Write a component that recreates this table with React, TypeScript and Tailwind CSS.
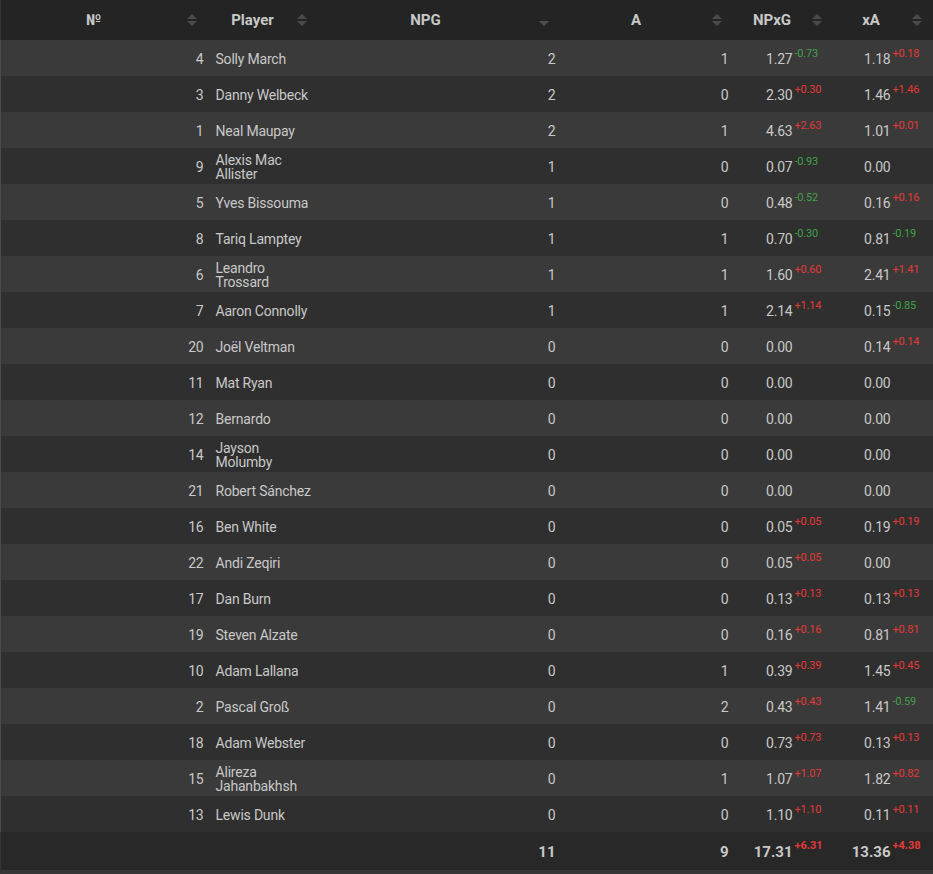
import React from "react";

type Row = {
  no: number;
  name: string[];
  npg: number;
  a: number;
  npxg: string;
  npxgD?: string;
  xa: string;
  xaD?: string;
};

const ROWS: Row[] = [
  { no: 4, name: ["Solly March"], npg: 2, a: 1, npxg: "1.27", npxgD: "-0.73", xa: "1.18", xaD: "+0.18" },
  { no: 3, name: ["Danny Welbeck"], npg: 2, a: 0, npxg: "2.30", npxgD: "+0.30", xa: "1.46", xaD: "+1.46" },
  { no: 1, name: ["Neal Maupay"], npg: 2, a: 1, npxg: "4.63", npxgD: "+2.63", xa: "1.01", xaD: "+0.01" },
  { no: 9, name: ["Alexis Mac", "Allister"], npg: 1, a: 0, npxg: "0.07", npxgD: "-0.93", xa: "0.00" },
  { no: 5, name: ["Yves Bissouma"], npg: 1, a: 0, npxg: "0.48", npxgD: "-0.52", xa: "0.16", xaD: "+0.16" },
  { no: 8, name: ["Tariq Lamptey"], npg: 1, a: 1, npxg: "0.70", npxgD: "-0.30", xa: "0.81", xaD: "-0.19" },
  { no: 6, name: ["Leandro", "Trossard"], npg: 1, a: 1, npxg: "1.60", npxgD: "+0.60", xa: "2.41", xaD: "+1.41" },
  { no: 7, name: ["Aaron Connolly"], npg: 1, a: 1, npxg: "2.14", npxgD: "+1.14", xa: "0.15", xaD: "-0.85" },
  { no: 20, name: ["Joël Veltman"], npg: 0, a: 0, npxg: "0.00", xa: "0.14", xaD: "+0.14" },
  { no: 11, name: ["Mat Ryan"], npg: 0, a: 0, npxg: "0.00", xa: "0.00" },
  { no: 12, name: ["Bernardo"], npg: 0, a: 0, npxg: "0.00", xa: "0.00" },
  { no: 14, name: ["Jayson", "Molumby"], npg: 0, a: 0, npxg: "0.00", xa: "0.00" },
  { no: 21, name: ["Robert Sánchez"], npg: 0, a: 0, npxg: "0.00", xa: "0.00" },
  { no: 16, name: ["Ben White"], npg: 0, a: 0, npxg: "0.05", npxgD: "+0.05", xa: "0.19", xaD: "+0.19" },
  { no: 22, name: ["Andi Zeqiri"], npg: 0, a: 0, npxg: "0.05", npxgD: "+0.05", xa: "0.00" },
  { no: 17, name: ["Dan Burn"], npg: 0, a: 0, npxg: "0.13", npxgD: "+0.13", xa: "0.13", xaD: "+0.13" },
  { no: 19, name: ["Steven Alzate"], npg: 0, a: 0, npxg: "0.16", npxgD: "+0.16", xa: "0.81", xaD: "+0.81" },
  { no: 10, name: ["Adam Lallana"], npg: 0, a: 1, npxg: "0.39", npxgD: "+0.39", xa: "1.45", xaD: "+0.45" },
  { no: 2, name: ["Pascal Groß"], npg: 0, a: 2, npxg: "0.43", npxgD: "+0.43", xa: "1.41", xaD: "-0.59" },
  { no: 18, name: ["Adam Webster"], npg: 0, a: 0, npxg: "0.73", npxgD: "+0.73", xa: "0.13", xaD: "+0.13" },
  { no: 15, name: ["Alireza", "Jahanbakhsh"], npg: 0, a: 1, npxg: "1.07", npxgD: "+1.07", xa: "1.82", xaD: "+0.82" },
  { no: 13, name: ["Lewis Dunk"], npg: 0, a: 0, npxg: "1.10", npxgD: "+1.10", xa: "0.11", xaD: "+0.11" },
];

function SortIcon({ down }: { down?: boolean }) {
  return (
    <svg width="10" height="14" viewBox="0 0 10 14" className="shrink-0" aria-hidden>
      {!down && <path d="M0 6 L5 1 L10 6 Z" fill="#4a4a4a" />}
      <path d="M0 8 L10 8 L5 13 Z" fill={down ? "#505050" : "#4a4a4a"} />
    </svg>
  );
}

function Head({ label, mr, down }: { label: string; mr: string; down?: boolean }) {
  return (
    <th className="p-0 font-bold">
      <div className="flex h-[40px] items-center">
        <span className="flex-1 text-center text-[15px]">{label}</span>
        <span className={mr}>
          <SortIcon down={down} />
        </span>
      </div>
    </th>
  );
}

function Delta({ d, w }: { d?: string; w: string }) {
  const color = d?.startsWith("-") ? "text-[#43a047]" : "text-[#e53935]";
  return (
    <span className={`${w} self-start pl-[2px] pt-[6px] text-left text-[11px] leading-none ${color}`}>
      {d}
    </span>
  );
}

export default function App() {
  return (
    <div
      className="min-h-[874px] w-[933px] bg-[#363636] text-[#c8c8c8]"
      style={{ fontFamily: "Roboto, 'Liberation Sans', sans-serif" }}
    >
      <table className="w-[933px] table-fixed border-collapse">
        <colgroup>
          <col className="w-[208px]" />
          <col className="w-[104px]" />
          <col className="w-[248px]" />
          <col className="w-[172px]" />
          <col className="w-[98px]" />
          <col className="w-[103px]" />
        </colgroup>
        <thead className="bg-[#242424]">
          <tr>
            <Head label="№" mr="mr-[12px]" />
            <Head label="Player" mr="mr-[6px]" />
            <Head label="NPG" mr="mr-[12px]" down />
            <Head label="A" mr="mr-[11px]" />
            <Head label="NPxG" mr="mr-[9px]" />
            <Head label="xA" mr="mr-[12px]" />
          </tr>
        </thead>
        <tbody className="text-[14px] tracking-[-0.2px]">
          {ROWS.map((r, i) => (
            <tr key={r.no} className={i % 2 === 0 ? "h-[36px] bg-[#3a3a3a]" : "h-[36px] bg-[#2f2f2f]"}>
              <td className="border-l border-[#4a4a4a] pr-[5px] pt-[2px] text-right">{r.no}</td>
              <td className="whitespace-nowrap pl-[7px] pt-[2px] leading-[14px]">
                {r.name.map((n) => (
                  <div key={n}>{n}</div>
                ))}
              </td>
              <td className="pr-[5px] pt-[2px] text-right">{r.npg}</td>
              <td className="pr-[4px] pt-[2px] text-right">{r.a}</td>
              <td className="p-0">
                <div className="flex h-[36px] items-center justify-end pr-[4px] pt-[2px]">
                  <span>{r.npxg}</span>
                  <Delta d={r.npxgD} w="w-[34px]" />
                </div>
              </td>
              <td className="p-0">
                <div className="flex h-[36px] items-center justify-end pr-[3px] pt-[2px]">
                  <span>{r.xa}</span>
                  <Delta d={r.xaD} w="w-[40px]" />
                </div>
              </td>
            </tr>
          ))}
        </tbody>
        <tfoot className="bg-[#282828] text-[15px] font-bold">
          <tr className="h-[38px]">
            <td />
            <td />
            <td className="pr-[5px] pt-[2px] text-right">11</td>
            <td className="pr-[4px] pt-[2px] text-right">9</td>
            <td className="p-0">
              <div className="flex h-[38px] items-center justify-end pr-[4px] pt-[2px]">
                <span>17.31</span>
                <span className="w-[34px] self-start pl-[2px] pt-[6px] text-left text-[11px] leading-none text-[#e53935]">+6.31</span>
              </div>
            </td>
            <td className="p-0">
              <div className="flex h-[38px] items-center justify-end pr-[3px] pt-[2px]">
                <span>13.36</span>
                <span className="w-[40px] self-start pl-[2px] pt-[6px] text-left text-[11px] leading-none text-[#e53935]">+4.38</span>
              </div>
            </td>
          </tr>
        </tfoot>
      </table>
    </div>
  );
}
